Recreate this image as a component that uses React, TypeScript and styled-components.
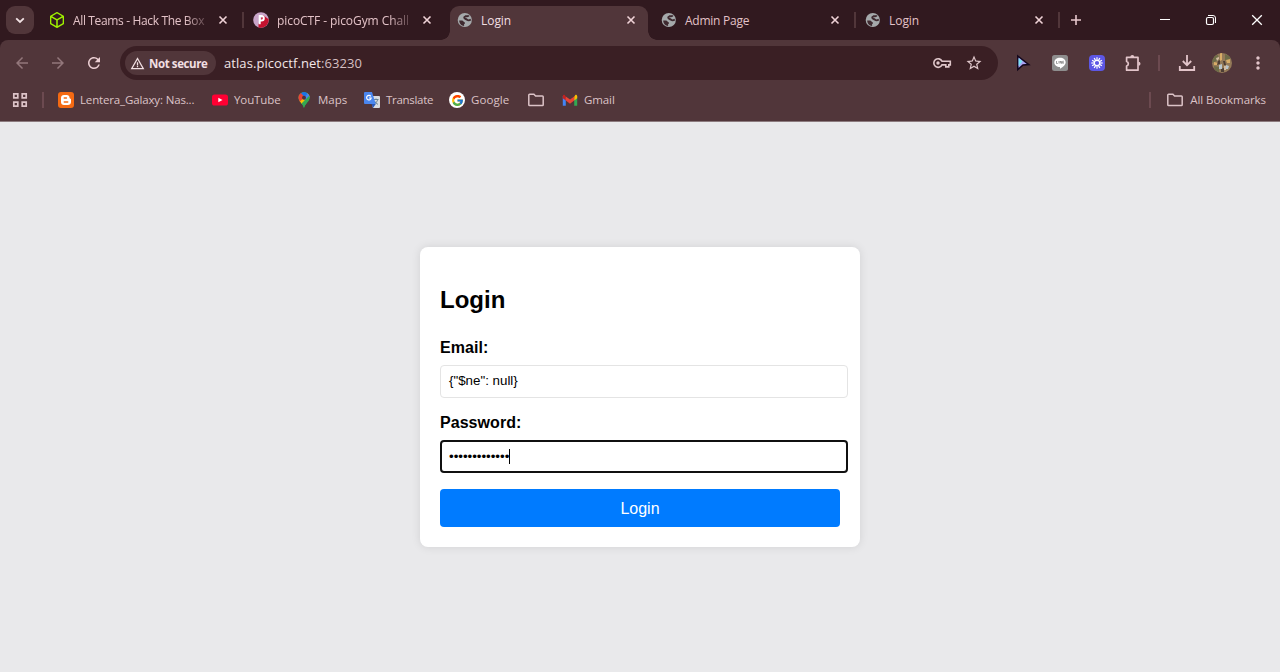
import React from "react";
import styled, { createGlobalStyle } from "styled-components";
import { MdArrowBack, MdArrowForward, MdRefresh, MdStarOutline, MdWarningAmber, MdMoreVert } from "react-icons/md";
import { FcGoogle } from "react-icons/fc";
import { SiHackthebox } from "react-icons/si";

const Global = createGlobalStyle`
  html, body { margin: 0; padding: 0; }
  body { background: #e9e9eb; overflow: hidden; }
  * { box-sizing: border-box; }
  svg { display: block; flex: none; }
`;

const Browser = styled.div`
  display: flex;
  flex-direction: column;
  height: 100vh;
  background: #31191f;
  font-family: "Open Sans", "Noto Sans", sans-serif;
  font-size: 12px;
  color: #e6c9cd;
`;

const TabStrip = styled.div`
  display: flex;
  align-items: flex-start;
  height: 40px;
  padding-top: 6px;
  padding-left: 6px;
`;

const TabSearch = styled.div`
  display: flex;
  align-items: center;
  justify-content: center;
  width: 28px;
  height: 28px;
  margin-right: 8px;
  border-radius: 9px;
  background: #51363a;
`;

const Tab = styled.div<{ $active?: boolean }>`
  position: relative;
  display: flex;
  align-items: center;
  width: 198px;
  height: 34px;
  padding: 0 9px 6px 7px;
  border-radius: 9px 9px 0 0;
  background: ${(p) => (p.$active ? "#51363a" : "transparent")};
  color: ${(p) => (p.$active ? "#f0dfe1" : "#e3c2c7")};
  ${(p) =>
    p.$active &&
    `&::before, &::after {
      content: "";
      position: absolute;
      bottom: 0;
      width: 9px;
      height: 9px;
    }
    &::before { left: -9px; background: radial-gradient(circle at 0 0, transparent 8.5px, #51363a 9px); }
    &::after { right: -9px; background: radial-gradient(circle at 100% 0, transparent 8.5px, #51363a 9px); }`}
`;

const TabTitle = styled.div<{ $track?: number; $fade?: boolean }>`
  flex: 1;
  white-space: nowrap;
  margin: 2px 9px 0 8px;
  line-height: 18px;
  letter-spacing: ${(p) => p.$track ?? 0}px;
  ${(p) => p.$fade && "mask-image: linear-gradient(to right, #000 112px, rgba(0, 0, 0, 0.2) 134px);"}
`;

const TabGap = styled.div<{ $line?: boolean }>`
  width: 6px;
  height: 16px;
  margin-top: 6px;
  border-left: 2px solid transparent;
  background: ${(p) => (p.$line ? "linear-gradient(to right, #51363a 0 2px, transparent 2px)" : "none")};
  background-clip: padding-box;
`;

const NewTab = styled.div`
  margin: 8px 0 0 7.5px;
`;

const WindowControls = styled.div`
  display: flex;
  gap: 34px;
  margin: 8px 17px 0 auto;
`;

const Chrome = styled.div`
  border-radius: 8px 8px 0 0;
  background: #51363a;
  border-bottom: 1px solid #8c7b7e;
  height: 82px;
`;

const Toolbar = styled.div`
  display: flex;
  align-items: center;
  height: 46px;
  padding-left: 13px;
`;

const NavButtons = styled.div`
  display: flex;
  align-items: center;
  gap: 18px;
  width: 107px;
  font-size: 18px;
`;

const Omnibox = styled.div`
  display: flex;
  align-items: center;
  width: 878px;
  height: 34px;
  padding: 0 15px 0 5px;
  border-radius: 17px;
  background: #3a1f24;
`;

const Chip = styled.div`
  display: flex;
  align-items: center;
  gap: 4px;
  width: 91px;
  height: 24px;
  padding-left: 5px;
  border-radius: 12px;
  background: #51363a;
  color: #f1dfe2;
  font-size: 11.5px;
  font-weight: 700;
  letter-spacing: -0.4px;
  white-space: nowrap;
`;

const Url = styled.div`
  flex: 1;
  margin-left: 8px;
  font-size: 13px;
  letter-spacing: 0.07px;
  color: #f3e6e8;
  span { color: #d5bfc2; }
`;

const OmniActions = styled.div`
  display: flex;
  align-items: center;
  gap: 13px;
`;

const Extensions = styled.div`
  display: grid;
  grid-template-columns: 36px 38px 35px 38px 14px 42px 28px 44px;
  align-items: center;
  justify-items: center;
  margin-left: 7px;
`;

const Divider = styled.div`
  width: 2px;
  height: 16px;
  background: #6c4a50;
`;

const Bookmarks = styled.div`
  display: flex;
  align-items: center;
  height: 28px;
  padding: 0 14px 0 12px;
  color: #dcc3c7;
`;

const Bookmark = styled.div<{ $w?: number; $track?: number }>`
  display: flex;
  align-items: center;
  gap: 6px;
  ${(p) => p.$w && `width: ${p.$w}px;`}
  letter-spacing: ${(p) => p.$track ?? 0}px;
  font-size: 11.5px;
  line-height: 16px;
  white-space: nowrap;
`;

const Spacer = styled.div<{ $w?: number }>`
  ${(p) => (p.$w ? `width: ${p.$w}px;` : "flex: 1;")}
`;

const Page = styled.main`
  display: flex;
  justify-content: center;
  align-items: center;
  flex: 1;
  background: #e9e9eb;
  font-family: "Liberation Sans", Arial, sans-serif;
  color: #000;
`;

const Card = styled.form`
  width: 440px;
  height: 300px;
  padding: 20px;
  border-radius: 8px;
  background: #fff;
  box-shadow: 0 0 10px rgba(0, 0, 0, 0.1);
`;

const Heading = styled.h2`
  margin: 19px 0 24px;
  font-size: 24px;
  line-height: 28px;
`;

const Label = styled.label`
  display: block;
  margin-bottom: 8px;
  font-size: 16px;
  font-weight: bold;
  line-height: 19px;
  letter-spacing: 0.05px;
`;

const Field = styled.div<{ $focus?: boolean }>`
  display: flex;
  align-items: center;
  width: 408px;
  height: 33px;
  margin-bottom: 15px;
  padding: ${(p) => (p.$focus ? "0 0 0 7px" : "0 0 2px 8px")};
  border: ${(p) => (p.$focus ? "2px solid #101010" : "1px solid #e4e4e4")};
  border-radius: 4px;
  font-size: 13.33px;
`;

const Dots = styled.div`
  display: flex;
  align-items: center;
  letter-spacing: -0.03px;
`;

const Caret = styled.span`
  width: 1px;
  height: 15px;
  background: #000;
`;

const Submit = styled.button`
  display: block;
  width: 400px;
  height: 38.4px;
  margin-top: 16px;
  padding: 1px 0 0;
  border: 0;
  border-radius: 4px;
  background: #007bff;
  color: #fff;
  font: 16px "Liberation Sans", Arial, sans-serif;
`;

const Globe = () => (
  <svg width="16" height="16" viewBox="0 0 16 16">
    <circle cx="7.8" cy="8" r="7.1" fill="#a5a9ab" />
    <path d="M11.800 3.400C11 5 9.700 4 8.400 4.300 6.600 4.800 7 6.600 8.600 7c1.500.4 1.700 1.500 3 1.400 1 0 1.600-.4 2.200-.9" fill="none" stroke="#3f2a30" strokeWidth="1.900" />
    <path d="M2.200 8.600H5c1.300 0 1.300 1.500 2.500 1.700.9.300.6 1.600-.4 1.800v2c-2.800-.2-4.900-2.600-4.900-5.500z" fill="#3f2a30" />
  </svg>
);

const Pico = () => (
  <svg width="16" height="16" viewBox="0 0 16 16">
    <circle cx="8" cy="8" r="7.8" fill="#c9a5c9" />
    <path d="M10 3l5.600 4.300A7.800 7.800 0 0 1 5.500 15.400V12z" fill="#c4122f" />
    <path d="M6.700 12.300V4h1.800a2.200 2.200 0 0 1 0 4.600H6.700" fill="none" stroke="#fff" strokeWidth="2" />
  </svg>
);

const Close = ({ color = "#f0d3d7" }: { color?: string }) => (
  <svg width="16" height="16" viewBox="0 0 16 16">
    <path d="M4.500 4.500l7 7m0-7l-7 7" stroke={color} strokeWidth="1.600" />
  </svg>
);

const Chevron = () => (
  <svg width="12" height="12" viewBox="0 0 12 12">
    <path d="M2.200 4.300L6 8l3.800-3.700" fill="none" stroke="#f3e3e5" strokeWidth="1.800" />
  </svg>
);

const Key = () => (
  <svg width="20" height="14" viewBox="0 0 20 14">
    <path d="M10 5.200H18.300v3.700h-1.500v2h-3v-2H10A4.300 4.300 0 1 1 10 5.200z" fill="none" stroke="#dfc6ca" strokeWidth="1.600" />
    <circle cx="6" cy="7" r="1.700" fill="#dfc6ca" />
  </svg>
);

const Cursor = () => (
  <svg width="16" height="18" viewBox="0 0 16 18">
    <path d="M2.800 2l11 8.600-5.800.4-5.200 4.600z" fill="#a9a2f4" stroke="#13071c" strokeWidth="1.500" />
    <path d="M3.600 4.200l4 3-4 5z" fill="#79e3f4" />
  </svg>
);

const Line = () => (
  <svg width="16" height="16" viewBox="0 0 16 16">
    <rect width="16" height="16" rx="2.500" fill="#8e8e8e" />
    <path d="M8 2.800c3.200 0 5.700 2 5.700 4.600 0 2.200-2.300 4.200-5.700 6.400v-1.900c-3.200 0-5.700-2-5.700-4.500S4.800 2.800 8 2.800z" fill="#fff" />
    <path d="M4.500 6v2.500h1.300M7 6v2.500m1.200 0V6l1.400 2.500V6m2.100.200h-1v2.100h1m-1-1h1" fill="none" stroke="#777" strokeWidth=".7" />
  </svg>
);

const Burst = () => (
  <svg width="16" height="16" viewBox="0 0 16 16">
    <rect width="16" height="16" rx="4" fill="#5d57e5" />
    {Array.from({ length: 12 }, (_, i) => (
      <path key={i} d="M8 2.300v3" stroke="#fff" strokeWidth="1.200" transform={`rotate(${i * 30} 8 8)`} />
    ))}
    <circle cx="8" cy="8" r="2.700" fill="none" stroke="#fff" strokeWidth="1.200" />
  </svg>
);

const Puzzle = () => (
  <svg width="18" height="18" viewBox="0 0 18 18">
    <path d="M2.600 3.400H14v12.800H2.600v-4.100a2.400 2.400 0 0 0 0-4.600z" fill="none" stroke="#e3c5ca" strokeWidth="1.700" strokeLinejoin="round" />
    <path d="M6.300 3a2 2 0 0 1 4 0zM14.500 7.700a2 2 0 0 1 0 4z" fill="#e3c5ca" />
  </svg>
);

const Download = () => (
  <svg width="18" height="18" viewBox="0 0 18 18">
    <path d="M9 1v10M4.800 7L9 11.200 13.200 7M1.800 12v4h14.400v-4" fill="none" stroke="#e3c5ca" strokeWidth="1.800" />
  </svg>
);

const Avatar = () => (
  <svg width="20" height="20" viewBox="0 0 20 20">
    <clipPath id="face"><circle cx="10" cy="10" r="10" /></clipPath>
    <g clipPath="url(#face)">
      <rect width="20" height="20" fill="#947a58" />
      <path d="M0 3l6-1 1 5-7 3zM13 1l6 3-2 5-4-2zM2 13l5 1v6H3z" fill="#6d6c48" />
      <path d="M8 0h2v7L8 8zM14 7l4-1v4h-3zM2 9l4 1-1 2H2z" fill="#d8ad67" />
      <path d="M6 8l2-1v4l-3 1zM11 8h2l1 4h-2zM9 16l3-1v4H9z" fill="#4d3e35" />
      <path d="M7 12l3-1v5H7zM14 12l3 1-1 3h-2z" fill="#b9c5ca" />
      <path d="M4 5l3-1v2L5 8zM12 13h2v4h-2z" fill="#d3bba0" />
    </g>
  </svg>
);

const Apps = () => (
  <svg width="16" height="16" viewBox="0 0 16 16">
    <path d="M1.800 1.800h4v4h-4zM10.200 1.800h4v4h-4zM1.800 10.200h4v4h-4zM10.200 10.200h4v4h-4z" fill="none" stroke="#dcc3c7" strokeWidth="1.700" />
  </svg>
);

const Blogger = () => (
  <svg width="16" height="16" viewBox="0 0 16 16">
    <rect width="16" height="16" rx="3" fill="#f56a13" />
    <path d="M6 3h2.800C10.500 3 11.500 4.200 11.500 5.600c0 .8.300 1.100 1 1.100.4 0 .5.300.5.700v2.500c0 1.800-1.300 3.100-3.100 3.100H6c-1.800 0-3-1.200-3-3V6c0-1.800 1.200-3 3-3z" fill="#fff" />
    <path d="M6.200 6h2.300M6.200 10h3.600" stroke="#f56a13" strokeWidth="1.300" strokeLinecap="round" />
  </svg>
);

const YouTube = () => (
  <svg width="16" height="16" viewBox="0 0 16 16">
    <rect y="2.500" width="16" height="11" rx="2.600" fill="#ff0033" />
    <path d="M6.300 5.700v4.600L10.500 8z" fill="#fff" />
  </svg>
);

const Pin = () => (
  <svg width="16" height="16" viewBox="0 0 16 16">
    <clipPath id="pin"><path d="M8 0a5.600 5.600 0 0 1 5.600 5.600C13.600 9.500 9.500 11 8 16 6.500 11 2.400 9.500 2.400 5.600A5.600 5.600 0 0 1 8 0z" /></clipPath>
    <g clipPath="url(#pin)">
      <rect width="16" height="16" fill="#34a853" />
      <path d="M2 10L12 0h4v3L4 14z" fill="#fbbc04" />
      <path d="M8 5.500L13 0l3 0v3L9 9z" fill="#4285f4" />
      <path d="M6 0h7L8 6 4.500 2.500z" fill="#1a73e8" />
      <path d="M0 0h4l4.500 5L3 10.500H0z" fill="#ea4335" />
      <path d="M14 3v7L8 16H5l0-4z" fill="#34a853" />
    </g>
    <circle cx="8" cy="5.700" r="2" fill="#513239" />
  </svg>
);

const Translate = () => (
  <svg width="16" height="16" viewBox="0 0 16 16">
    <path d="M6 4h9a1 1 0 0 1 1 1v10a1 1 0 0 1-1 1H9z" fill="#d8dce0" />
    <path d="M9.500 7.500h5M12 6.500v1m1.700 0c-.5 2-1.700 3.500-3.200 4.500m0-3c.6 1.400 2 2.700 3.500 3.300" fill="none" stroke="#607d8b" strokeWidth=".9" />
    <path d="M1 0h7l3.800 12H1a1 1 0 0 1-1-1V1a1 1 0 0 1 1-1z" fill="#4a86ee" />
    <path d="M7.500 12h4.300L9 16z" fill="#2856b5" />
    <path d="M6.800 4.300A2.300 2.300 0 1 0 7.200 6H5" fill="none" stroke="#fff" strokeWidth="1.200" />
  </svg>
);

const GoogleBadge = styled.div`
  display: flex;
  align-items: center;
  justify-content: center;
  width: 16px;
  height: 16px;
  border-radius: 50%;
  background: #fff;
`;

const Gmail = () => (
  <svg width="16" height="16" viewBox="0 0 16 16">
    <path d="M.8 4v9.800h3V6z" fill="#4285f4" />
    <path d="M12.200 6v7.800h3V4z" fill="#34a853" />
    <path d="M.8 4.300v2L3.800 8.500V4.700L2.700 3C1.800 2.500.8 3.200.8 4.300z" fill="#c5221f" />
    <path d="M15.200 4.300v2l-3 2.200V4.700L13.300 3c.9-.5 1.900.2 1.900 1.300z" fill="#fbbc04" />
    <path d="M3.800 8.500V4.400L8 7.600l4.200-3.200v4.100L8 11.700z" fill="#ea4335" />
  </svg>
);

const Folder = () => (
  <svg width="18" height="16" viewBox="0 0 18 16">
    <path d="M1.800 3a.8.800 0 0 1 .8-.8h4.300L8.600 4h6.800a.8.800 0 0 1 .8.800v8a.8.800 0 0 1-.8.800H2.600a.8.800 0 0 1-.8-.8z" fill="none" stroke="#dcc3c7" strokeWidth="1.500" />
  </svg>
);

const tabs = [
  { title: "All Teams - Hack The Box", icon: <SiHackthebox size={16} color="#9fef00" />, track: -0.35, fade: true },
  { title: "picoCTF - picoGym Chall", icon: <Pico />, track: -0.08, fade: true },
  { title: "Login", icon: <Globe />, active: true, track: -0.05 },
  { title: "Admin Page", icon: <Globe />, track: -0.25 },
  { title: "Login", icon: <Globe />, track: -0.05 },
];

export default function App() {
  return (
    <>
      <Global />
      <Browser>
        <TabStrip>
          <TabSearch><Chevron /></TabSearch>
          {tabs.map((t, i) => (
            <React.Fragment key={i}>
              <Tab $active={t.active}>
                {t.icon}
                <TabTitle $track={t.track} $fade={t.fade}>{t.title}</TabTitle>
                <Close />
              </Tab>
              <TabGap $line={i !== 1 && i !== 2} />
            </React.Fragment>
          ))}
          <NewTab>
            <svg width="12" height="12" viewBox="0 0 12 12"><path d="M6 1v10M1 6h10" stroke="#e8c8cd" strokeWidth="1.600" /></svg>
          </NewTab>
          <WindowControls>
            <svg width="12" height="12" viewBox="0 0 12 12"><path d="M1 5.500h10" stroke="#fff" /></svg>
            <svg width="12" height="12" viewBox="0 0 12 12"><path d="M3 1.500h5A2.500 2.500 0 0 1 10.500 4v5" fill="none" stroke="#fff" /><rect x="1.500" y="3.500" width="7" height="7" rx="1.500" fill="none" stroke="#fff" strokeWidth="1.200" /></svg>
            <svg width="12" height="12" viewBox="0 0 12 12"><path d="M1.200 1.200l9.600 9.600m0-9.600l-9.600 9.600" stroke="#fff" strokeWidth="1.300" /></svg>
          </WindowControls>
        </TabStrip>
        <Chrome>
          <Toolbar>
            <NavButtons>
              <MdArrowBack color="#93777b" />
              <MdArrowForward color="#93777b" />
              <MdRefresh color="#eccfd3" />
            </NavButtons>
            <Omnibox>
              <Chip><MdWarningAmber size={15} />Not secure</Chip>
              <Url>atlas.picoctf.net<span>:63230</span></Url>
              <OmniActions>
                <Key />
                <MdStarOutline size={18} color="#dfc6ca" />
              </OmniActions>
            </Omnibox>
            <Extensions>
              <Cursor />
              <Line />
              <Burst />
              <Puzzle />
              <Divider />
              <Download />
              <Avatar />
              <MdMoreVert size={20} color="#e3c5ca" />
            </Extensions>
          </Toolbar>
          <Bookmarks>
            <Apps />
            <Spacer $w={14} />
            <Divider />
            <Spacer $w={14} />
            <Bookmark $w={154} $track={-0.15}><Blogger />Lentera_Galaxy: Nas...</Bookmark>
            <Bookmark $w={84} $track={-0.1}><YouTube />YouTube</Bookmark>
            <Bookmark $w={68}><Pin />Maps</Bookmark>
            <Bookmark $w={85} $track={-0.3}><Translate />Translate</Bookmark>
            <Bookmark $w={78} $track={0.1}><GoogleBadge><FcGoogle size={13} /></GoogleBadge>Google</Bookmark>
            <Bookmark $w={35}><Folder /></Bookmark>
            <Bookmark $track={-0.1}><Gmail />Gmail</Bookmark>
            <Spacer />
            <Divider />
            <Spacer $w={15} />
            <Bookmark $track={-0.07}><Folder />All Bookmarks</Bookmark>
          </Bookmarks>
        </Chrome>
        <Page>
          <Card>
            <Heading>Login</Heading>
            <Label>Email:</Label>
            <Field>{'{"$ne": null}'}</Field>
            <Label>Password:</Label>
            <Field $focus><Dots>•••••••••••••<Caret /></Dots></Field>
            <Submit type="button">Login</Submit>
          </Card>
        </Page>
      </Browser>
    </>
  );
}
